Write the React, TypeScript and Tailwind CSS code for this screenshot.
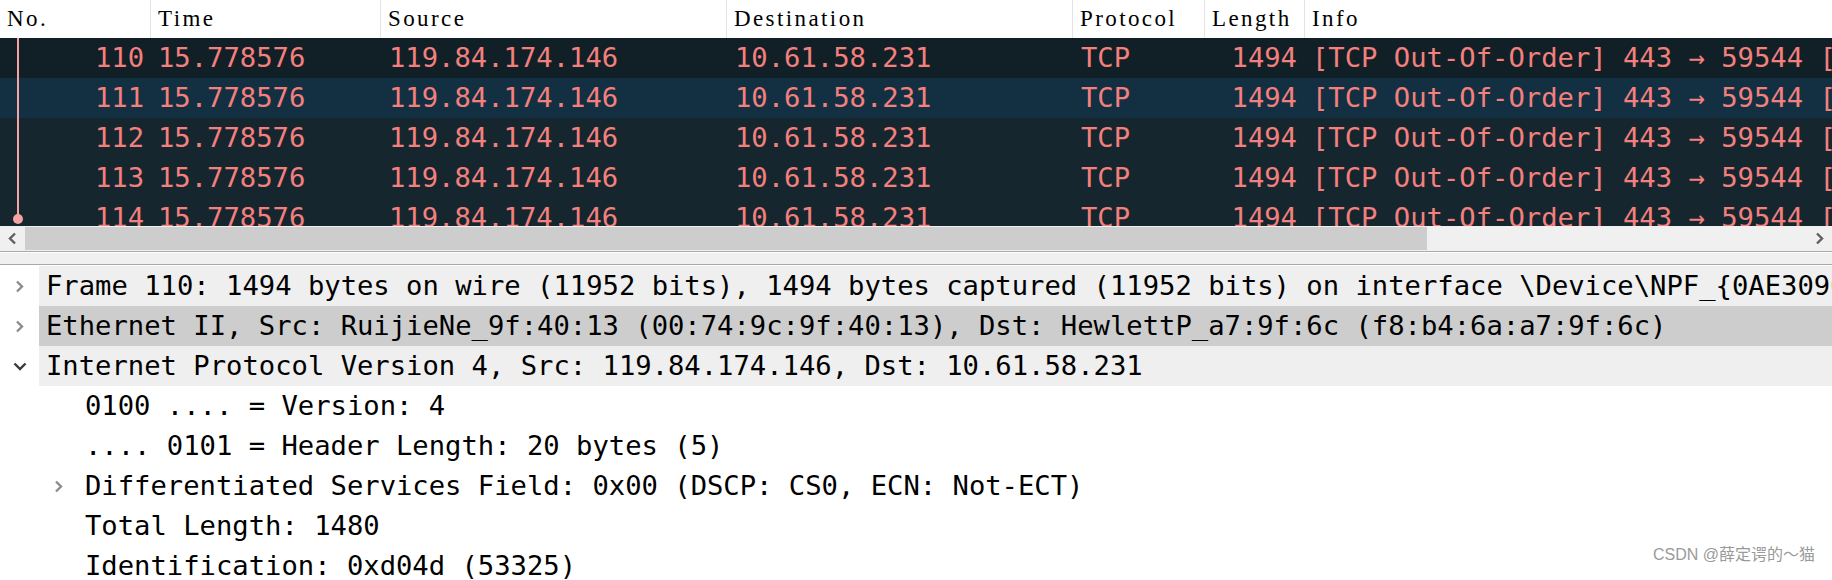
import React from 'react'

const MONO = "font-['DejaVu_Sans_Mono',monospace]"

const COLS = 'grid grid-cols-[151px_230px_346px_346px_132px_100px_1fr]'

const HEADERS = ['No.', 'Time', 'Source', 'Destination', 'Protocol', 'Length', 'Info']

type Packet = { no: number; bg: string }

const PACKETS: Packet[] = [
  { no: 110, bg: 'bg-[#111f26]' },
  { no: 111, bg: 'bg-[#132f42]' },
  { no: 112, bg: 'bg-[#15262e]' },
  { no: 113, bg: 'bg-[#15262e]' },
  { no: 114, bg: 'bg-[#15262e]' },
]

type Node = { text: string; depth: number; arrow?: 'right' | 'down'; bg?: string }

const TREE: Node[] = [
  {
    text: 'Frame 110: 1494 bytes on wire (11952 bits), 1494 bytes captured (11952 bits) on interface \\Device\\NPF_{0AE3090B-5C1D-4F0A-9B8E-2D7F6A1C3E44}, id 0',
    depth: 0,
    arrow: 'right',
    bg: 'bg-[#efefef]',
  },
  {
    text: 'Ethernet II, Src: RuijieNe_9f:40:13 (00:74:9c:9f:40:13), Dst: HewlettP_a7:9f:6c (f8:b4:6a:a7:9f:6c)',
    depth: 0,
    arrow: 'right',
    bg: 'bg-[#cdcdcd]',
  },
  {
    text: 'Internet Protocol Version 4, Src: 119.84.174.146, Dst: 10.61.58.231',
    depth: 0,
    arrow: 'down',
    bg: 'bg-[#efefef]',
  },
  { text: '0100 .... = Version: 4', depth: 1 },
  { text: '.... 0101 = Header Length: 20 bytes (5)', depth: 1 },
  { text: 'Differentiated Services Field: 0x00 (DSCP: CS0, ECN: Not-ECT)', depth: 1, arrow: 'right' },
  { text: 'Total Length: 1480', depth: 1 },
  { text: 'Identification: 0xd04d (53325)', depth: 1 },
]

function ChevronRight({ color = '#8c8c8c' }: { color?: string }) {
  return (
    <svg width="9" height="13" viewBox="0 0 9 13" fill="none">
      <path d="M2 1.5 L7 6.5 L2 11.5" stroke={color} strokeWidth="2.4" />
    </svg>
  )
}

function ChevronLeft({ color = '#5f5f5f' }: { color?: string }) {
  return (
    <svg width="9" height="13" viewBox="0 0 9 13" fill="none">
      <path d="M7 1.5 L2 6.5 L7 11.5" stroke={color} strokeWidth="2.4" />
    </svg>
  )
}

function ChevronDown() {
  return (
    <svg width="14" height="9" viewBox="0 0 14 9" fill="none">
      <path d="M1.5 1.5 L7 7 L12.5 1.5" stroke="#3a3a3a" strokeWidth="2.4" />
    </svg>
  )
}

function PacketList() {
  return (
    <div className="h-[226px] overflow-hidden">
      <div className={`${COLS} h-[38px] bg-white font-['Liberation_Serif',serif] text-[23px] tracking-[2.4px] text-black`}>
        {HEADERS.map((h, i) => (
          <div
            key={h}
            className={`flex items-center pl-[7px] ${i < HEADERS.length - 1 ? 'border-r border-[#e4e4e4]' : ''}`}
          >
            {h}
          </div>
        ))}
      </div>
      <div className={`relative ${MONO} text-[27.2px] leading-[40px] text-[#f3807d]`}>
        {PACKETS.map((p) => (
          <div key={p.no} className={`${COLS} h-10 whitespace-pre ${p.bg}`}>
            <div className="pr-[7px] text-right">{p.no}</div>
            <div className="pl-[7px]">15.778576</div>
            <div className="pl-[8px]">119.84.174.146</div>
            <div className="pl-[8px]">10.61.58.231</div>
            <div className="pl-[8px]">TCP</div>
            <div className="pr-[8px] text-right">1494</div>
            <div className="overflow-hidden pl-[7px]">[TCP Out-Of-Order] 443 → 59544 [ACK] Seq=1 Ack=1 Win=64240 Len=1440</div>
          </div>
        ))}
        {/* related-packet marker in the No. column */}
        <div className="absolute left-[17px] top-0 h-[181px] w-[2px] bg-[#f5a3a3]" />
        <div className="absolute left-[13px] top-[176px] h-[10px] w-[10px] rounded-full bg-[#f5a3a3]" />
      </div>
    </div>
  )
}

function HScrollbar() {
  return (
    <div className="flex h-[25px] bg-[#f0f0f0]">
      <div className="flex w-[25px] items-center justify-center">
        <ChevronLeft />
      </div>
      <div className="flex flex-1 items-stretch py-[1px]">
        <div className="w-[1402px] bg-[#cdcdcd]" />
      </div>
      <div className="flex w-[25px] items-center justify-center">
        <ChevronRight color="#5f5f5f" />
      </div>
    </div>
  )
}

function Splitter() {
  return (
    <div className="h-[15px] bg-white">
      <div className="h-[2px] border-t border-[#a9a9a9] bg-white" />
      <div className="h-[11px] bg-[#f0f0f0]" />
      <div className="h-[2px] border-t border-[#a9a9a9] bg-white" />
    </div>
  )
}

function Tree() {
  return (
    <div className={`${MONO} text-[27.2px] leading-[40px] text-black`}>
      {TREE.map((n, i) => (
        <div key={i} className="flex h-10 whitespace-pre">
          <div className={n.depth === 1 ? 'w-[39px] shrink-0' : 'hidden'} />
          <div className="flex w-[39px] shrink-0 items-center justify-center">
            {n.arrow === 'right' && <ChevronRight />}
            {n.arrow === 'down' && <ChevronDown />}
          </div>
          <div className={`flex-1 overflow-hidden pl-[7px] ${n.bg ?? ''}`}>{n.text}</div>
        </div>
      ))}
    </div>
  )
}

export default function App() {
  return (
    <div className="relative h-[580px] w-[1832px] overflow-hidden bg-white">
      <PacketList />
      <HScrollbar />
      <Splitter />
      <Tree />
      <div className="absolute bottom-[13px] right-[17px] font-['Liberation_Sans','Noto_Sans_CJK_SC',sans-serif] text-[16px] text-[#9a9a9a]">
        CSDN @薛定谔的～猫
      </div>
    </div>
  )
}
